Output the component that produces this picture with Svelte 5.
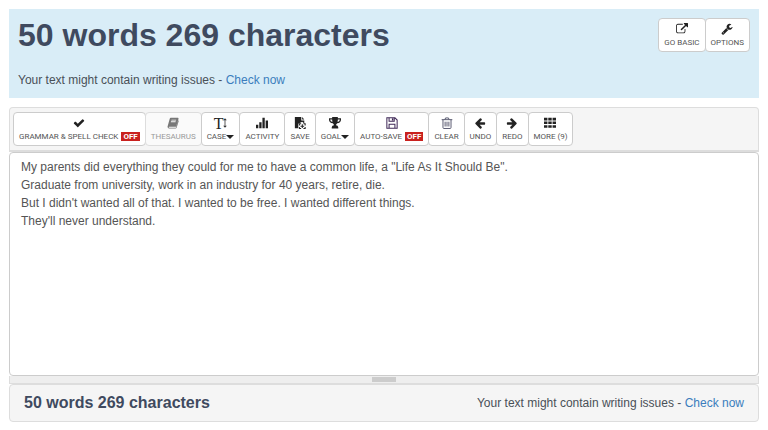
<script>
  let text = $state(
    [
      'My parents did everything they could for me to have a common life, a "Life As It Should Be".',
      'Graduate from university, work in an industry for 40 years, retire, die.',
      "But I didn't wanted all of that. I wanted to be free. I wanted different things.",
      "They'll never understand."
    ].join('\n')
  );

  const summary = '50 words 269 characters';

  const tools = [
    { icon: 'check', label: 'Grammar & Spell Check', off: true },
    { icon: 'book', label: 'Thesaurus', disabled: true },
    { icon: 'case', label: 'Case', caret: true },
    { icon: 'chart', label: 'Activity' },
    { icon: 'save', label: 'Save' },
    { icon: 'trophy', label: 'Goal', caret: true },
    { icon: 'floppy', label: 'Auto-Save', off: true },
    { icon: 'trash', label: 'Clear' },
    { icon: 'left', label: 'Undo' },
    { icon: 'right', label: 'Redo' },
    { icon: 'grid', label: 'More (9)' }
  ];

  const arrow =
    'M1664 896v128q0 53-32.5 90.5t-84.5 37.5h-704l293 294q38 36 38 90t-38 90l-75 76q-37 37-90 37-52 0-91-37l-651-652q-37-37-37-90 0-52 37-91l651-650q38-38 91-38 52 0 90 38l75 74q38 38 38 91t-38 91l-293 293h704q52 0 84.5 37.5t32.5 90.5z';

  const solid = {
    check:
      'M1671 566q0 40-28 68l-724 724-136 136q-28 28-68 28t-68-28l-136-136-362-362q-28-28-28-68t28-68l136-136q28-28 68-28t68 28l294 295 656-657q28-28 68-28t68 28l136 136q28 28 28 68z',
    wrench:
      'M448 1472q0-26-19-45t-45-19-45 19-19 45 19 45 45 19 45-19 19-45zm644-420l-682 682q-37 37-90 37-52 0-91-37l-106-108q-38-36-38-90 0-53 38-91l681-681q39 98 114.5 173.5t173.5 114.5zm634-435q0 39-23 106-47 134-164.5 217.5t-258.5 83.5q-185 0-316.5-131.5t-131.5-316.5 131.5-316.5 316.5-131.5q58 0 121.5 16.5t107.5 46.5q16 11 16 28t-16 28l-293 169v224l193 107q5-3 79-48.5t135.5-81 70.5-35.5q15 0 23.5 10t8.5 25z',
    external:
      'M1408 928v320q0 119-84.5 203.5t-203.5 84.5h-832q-119 0-203.5-84.5t-84.5-203.5v-832q0-119 84.5-203.5t203.5-84.5h704q14 0 23 9t9 23v64q0 14-9 23t-23 9h-704q-66 0-113 47t-47 113v832q0 66 47 113t113 47h832q66 0 113-47t47-113v-320q0-14 9-23t23-9h64q14 0 23 9t9 23zm384-864v512q0 26-19 45t-45 19-45-19l-176-176-652 652q-10 10-23 10t-23-10l-114-114q-10-10-10-23t10-23l652-652-176-176q-19-19-19-45t19-45 45-19h512q26 0 45 19t19 45z',
    left: arrow,
    right: arrow
  };
</script>

{#snippet glyph(name)}
  {#if name === 'case'}
    <span class="case" aria-hidden="true">T<svg viewBox="0 0 5 14"><path d="M2.5 1 4.800 3.600H3v6.800h1.800L2.500 13 .2 10.400H2V3.600H.2z" /></svg></span>
  {:else if solid[name]}
    <svg class="icon" class:flip={name === 'right'} viewBox="0 0 1792 1792" aria-hidden="true">
      <path d={solid[name]} />
    </svg>
  {:else}
    <svg class="icon" viewBox="0 0 14 14" aria-hidden="true">
      {#if name === 'book'}
        <path fill-rule="evenodd" d="M4.4 1h8.2q1.1.2.8 1.3l-2.5 8.2q-.3 1-1.4 1H2.4q-.7 0-.5.5.2.5.8.5h7.7l2.7-8.8q.7.5.5 1.2l-2.3 7.4q-.3 1.1-1.4 1.1H2.4Q.7 13.2.6 11.4L3.1 2.4Q3.4 1 4.4 1zM5 4h5.5l.3-.9H5.3zm-.6 2h5.5l.3-.9H4.7z" />
      {:else if name === 'chart'}
        <path d="M0 9h2.700v4H0zM3.800 6h2.700v7H3.800zM7.500 1h2.700v12H7.500zM11.300 4H14v9h-2.700z" />
      {:else if name === 'save'}
        <path d="M1 0h7.500v4H12v3.500L9.500 5.500 5 8v5H1zM9.500 0 12 3H9.500z" />
        <path class="line" d="M6.300 10V8h2M11 8h2v2M13 11.700V13.400h-2M8.300 13.400h-2v-1.700M7.600 10.700h4.200M9.700 8.600v4.200" />
      {:else if name === 'trophy'}
        <path d="M3.700 0h6.600v1.500H14v1.900Q13.600 6.700 9.600 7.200 8.200 8.500 8.200 9.700q2.300.2 2.600 2.300v1.300H3.200V12q.3-2.100 2.600-2.300 0-1.200-1.400-2.500Q.4 6.700 0 3.400V1.500h3.700zM1.300 2.800q.2 2.400 2.700 3Q3.700 4.500 3.700 2.800zM10.300 2.800q0 1.700-.3 3 2.500-.6 2.700-3z" fill-rule="evenodd" />
      {:else if name === 'floppy'}
        <g class="violet"><path class="line" d="M1 1h9.400L13 3.600V13H1zM3.600 1v4h6V1M3.600 13V8.500h6.800V13" /><path d="M6.900 1.500h1.700v2.700H6.900z" /></g>
      {:else if name === 'trash'}
        <g class="slate"><path class="line" d="M.8 3.100h12.400M4.600 3l.7-1.900h3.400L9.400 3M2.300 3.200v9q.1 1.200.9 1.200h7.600q.8 0 .9-1.200v-9M4.800 5.500v5.600M7 5.500v5.600M9.200 5.500v5.600" /></g>
      {:else}
        <path d="M0 1h4v3H0zM5 1h4v3H5zM10 1h4v3h-4zM0 5.300h4v3H0zM5 5.300h4v3H5zM10 5.300h4v3h-4zM0 9.600h4v3H0zM5 9.600h4v3H5zM10 9.600h4v3h-4z" />
      {/if}
    </svg>
  {/if}
{/snippet}

{#snippet tool(t)}
  <button type="button" disabled={t.disabled}>
    {@render glyph(t.icon)}
    <span class="label">
      {t.label}{#if t.off}<span class="off">Off</span>{/if}{#if t.caret}<span class="caret"></span>{/if}
    </span>
  </button>
{/snippet}

<main>
  <header>
    <div>
      <h1>{summary}</h1>
      <p>Your text might contain writing issues - <a href="#check">Check now</a></p>
    </div>
    <div class="group">
      {@render tool({ icon: 'external', label: 'Go Basic' })}
      {@render tool({ icon: 'wrench', label: 'Options' })}
    </div>
  </header>

  <section>
    <div class="toolbar group">
      {#each tools as t}
        {@render tool(t)}
      {/each}
    </div>
    <textarea rows="12" aria-label="Your text" spellcheck="false" bind:value={text}></textarea>
    <div class="resizer"><span></span></div>
    <footer>
      <strong>{summary}</strong>
      <p>Your text might contain writing issues - <a href="#check">Check now</a></p>
    </footer>
  </section>
</main>

<style>
  :global(body) {
    margin: 0;
    background: #fff;
  }
  main {
    padding: 9px;
    font-family: 'Liberation Sans', Arial, sans-serif;
    font-size: 12px;
    line-height: 18px;
    color: #495057;
  }
  header {
    display: flex;
    justify-content: space-between;
    align-items: flex-start;
    padding: 9px;
    margin-bottom: 9px;
    background: #d9edf7;
  }
  h1 {
    margin: 0 0 18px;
    font-size: 32px;
    line-height: 35px;
    color: #3f4a5f;
  }
  p {
    margin: 0;
  }
  a {
    color: #3b7dbd;
    text-decoration: none;
  }
  .group {
    display: flex;
  }
  .toolbar {
    padding: 4px 3px;
    border: 1px solid #ddd;
    border-bottom-width: 2px;
    border-radius: 4px 4px 0 0;
    background: #f5f5f5;
  }
  button {
    display: flex;
    flex-direction: column;
    align-items: center;
    box-sizing: border-box;
    height: 34px;
    margin: 0;
    padding: 4px 5px;
    border: 1px solid #ccc;
    border-radius: 4px;
    background: #fff;
    color: #555;
    font-family: Roboto, 'Liberation Sans', sans-serif;
    font-size: 8px;
    line-height: 9px;
    text-transform: uppercase;
    white-space: nowrap;
  }
  button + button {
    margin-left: -1px;
  }
  button:disabled {
    border-color: #ddd;
    background: #fafafa;
    color: #999;
  }
  button:disabled .icon {
    fill: #777;
  }
  .icon {
    display: block;
    width: 12px;
    height: 12px;
    margin-bottom: 3px;
    fill: #222;
  }
  .flip {
    transform: scaleX(-1);
  }
  .line {
    fill: none;
    stroke: #222;
    stroke-width: 1.2;
  }
  .violet {
    fill: #402a58;
  }
  .violet .line {
    stroke: #402a58;
  }
  .slate .line {
    stroke: #41435c;
    stroke-width: 1;
  }
  .case {
    display: flex;
    align-items: center;
    height: 12px;
    margin-bottom: 3px;
    font-family: 'Liberation Serif', serif;
    font-size: 16px;
    color: #222;
  }
  .case svg {
    width: 4px;
    height: 12px;
    fill: #333;
  }
  .label {
    display: flex;
    align-items: center;
  }
  .off {
    margin-left: 3px;
    padding: 0 2px;
    background: #c9211e;
    color: #fff;
    font-weight: bold;
  }
  .caret {
    border: 4px solid transparent;
    border-top-color: #222;
    border-bottom: 0;
  }
  textarea {
    display: block;
    box-sizing: border-box;
    width: 100%;
    margin: 0;
    padding: 5px 11px 1px;
    border: 1px solid #ccc;
    border-radius: 4px;
    outline: 0;
    resize: none;
    overflow: hidden;
    background: #fff;
    color: #555;
    font: inherit;
  }
  .resizer {
    display: flex;
    justify-content: center;
    align-items: center;
    height: 8px;
    border: 1px solid #ddd;
    border-top: 0;
    box-sizing: border-box;
    background: #eee;
  }
  .resizer span {
    width: 24px;
    height: 5px;
    background: #ccc;
  }
  footer {
    display: flex;
    justify-content: space-between;
    align-items: center;
    padding: 9px 14px;
    border: 1px solid #ddd;
    border-radius: 4px;
    background: #f5f5f5;
  }
  strong {
    font-size: 16px;
    color: #3f4a5f;
  }
</style>
